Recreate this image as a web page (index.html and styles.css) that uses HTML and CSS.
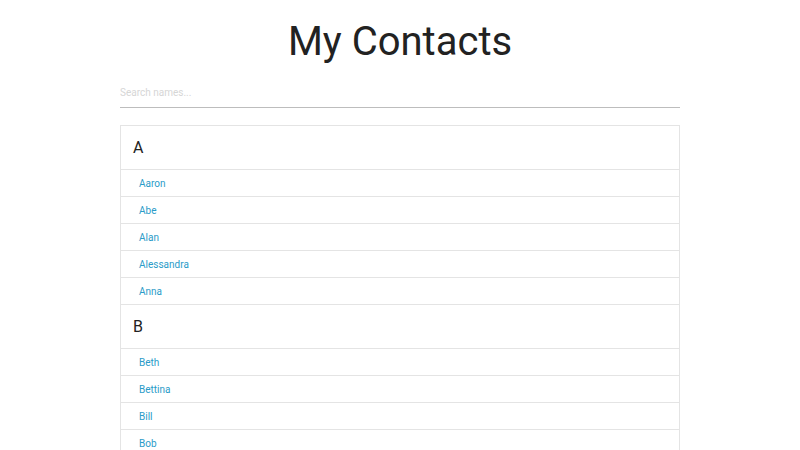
FILE: index.html
```html
<!DOCTYPE html>
<html lang="en">
<head>
<meta charset="utf-8">
<title>My Contacts</title>
<link rel="stylesheet" href="styles.css">
</head>
<body>
<main class="page">
  <h1 class="title">My Contacts</h1>
  <input class="search" type="text" placeholder="Search names...">
  <div class="contacts">
    <section class="group">
      <h2 class="group-letter">A</h2>
      <ul class="names">
        <li><a href="#">Aaron</a></li>
        <li><a href="#">Abe</a></li>
        <li><a href="#">Alan</a></li>
        <li><a href="#">Alessandra</a></li>
        <li><a href="#">Anna</a></li>
      </ul>
    </section>
    <section class="group">
      <h2 class="group-letter">B</h2>
      <ul class="names">
        <li><a href="#">Beth</a></li>
        <li><a href="#">Bettina</a></li>
        <li><a href="#">Bill</a></li>
        <li><a href="#">Bob</a></li>
      </ul>
    </section>
  </div>
</main>
</body>
</html>
```
FILE: styles.css
```css
* { box-sizing: border-box; }

body {
  margin: 0;
  background: #fff;
  font-family: Roboto, "Liberation Sans", sans-serif;
  color: #212121;
}

.page {
  width: 560px;
  margin: 0 auto;
  display: flex;
  flex-direction: column;
}

.title {
  margin: 0;
  padding-top: 17px;
  font-size: 40px;
  font-weight: 400;
  line-height: 49px;
  text-align: center;
  color: #222;
}

.search {
  margin-top: 15px;
  height: 27px;
  padding: 0 0 4px;
  border: none;
  border-bottom: 1px solid #bdbdbd;
  font-family: inherit;
  font-size: 10px;
  outline: none;
  background: transparent;
}

.search::placeholder { color: #d6d6d6; }

.contacts {
  margin-top: 17px;
  border: 1px solid #e4e4e4;
  border-bottom: none;
}

.group-letter {
  margin: 0;
  height: 44px;
  padding-left: 12px;
  display: flex;
  align-items: center;
  font-size: 16px;
  font-weight: 400;
  color: #222;
  border-bottom: 1px solid #e4e4e4;
}

.names {
  list-style: none;
  margin: 0;
  padding: 0;
}

.names li {
  height: 27px;
  display: flex;
  align-items: center;
  padding-left: 18px;
  border-bottom: 1px solid #e4e4e4;
}

.names a {
  font-size: 10px;
  color: #2a9bc8;
  text-decoration: none;
}
```
